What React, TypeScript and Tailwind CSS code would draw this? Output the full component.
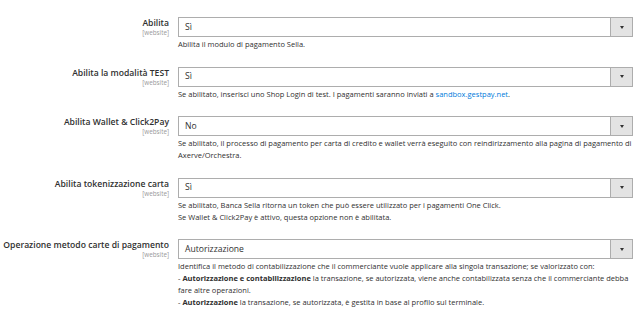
import React from 'react';

type Row = {
    label: string;
    value: string;
    comment: React.ReactNode;
};

const rows: Row[] = [
    {
        label: 'Abilita',
        value: 'Sì',
        comment: <p>Abilita il modulo di pagamento Sella.</p>,
    },
    {
        label: 'Abilita la modalità TEST',
        value: 'Sì',
        comment: (
            <p>
                Se abilitato, inserisci uno Shop Login di test. I pagamenti saranno inviati a{' '}
                <a href="#" className="text-[#007bdb]">sandbox.gestpay.net</a>.
            </p>
        ),
    },
    {
        label: 'Abilita Wallet & Click2Pay',
        value: 'No',
        comment: (
            <p>
                Se abilitato, il processo di pagamento per carta di credito e wallet verrà eseguito con reindirizzamento alla pagina di pagamento di Axerve/Orchestra.
            </p>
        ),
    },
    {
        label: 'Abilita tokenizzazione carta',
        value: 'Sì',
        comment: (
            <>
                <p>Se abilitato, Banca Sella ritorna un token che può essere utilizzato per i pagamenti One Click.</p>
                <p>Se Wallet &amp; Click2Pay è attivo, questa opzione non è abilitata.</p>
            </>
        ),
    },
    {
        label: 'Operazione metodo carte di pagamento',
        value: 'Autorizzazione',
        comment: (
            <>
                <p>Identifica il metodo di contabilizzazione che il commerciante vuole applicare alla singola transazione; se valorizzato con:</p>
                <p>
                    - <b className="font-bold">Autorizzazione e contabilizzazione</b> la transazione, se autorizzata, viene anche contabilizzata senza che il commerciante debba fare altre operazioni.
                </p>
                <p>
                    - <b className="font-bold">Autorizzazione</b> la transazione, se autorizzata, è gestita in base al profilo sul terminale.
                </p>
            </>
        ),
    },
];

const SelectBox = ({ value }: { value: string }) => (
    <div className="flex h-[20px] border border-[#adadad] bg-white">
        <div className="flex-1 flex items-center pl-[6px] text-[8.6px] text-[#303030]">{value}</div>
        <div className="w-[22px] flex items-center justify-center bg-[#e3e3e3] border-l border-[#adadad]">
            <span className="block w-0 h-0 border-l-[2.5px] border-r-[2.5px] border-t-[3px] border-l-transparent border-r-transparent border-t-[#333]" />
        </div>
    </div>
);

export default function App() {
    return (
        <div className="w-[642px] h-[309px] overflow-hidden bg-white pt-[17px] pr-[9px] text-[#303030]" style={{ fontFamily: '"Open Sans", sans-serif' }}>
            {rows.map((row, i) => (
                <div key={i} className="flex mb-[16.5px]">
                    <div className="w-[169px] shrink-0 text-right pt-[1px]">
                        <div className="text-[8.6px] leading-[11px] font-semibold text-[#303030]">{row.label}</div>
                        <div className="text-[6.3px] leading-[8px] text-[#999]">[website]</div>
                    </div>
                    <div className="flex-1 ml-[9px]">
                        <SelectBox value={row.value} />
                        <div className="mt-[1px] text-[7.5px] leading-[12px] text-[#303030]">{row.comment}</div>
                    </div>
                </div>
            ))}
        </div>
    );
}
